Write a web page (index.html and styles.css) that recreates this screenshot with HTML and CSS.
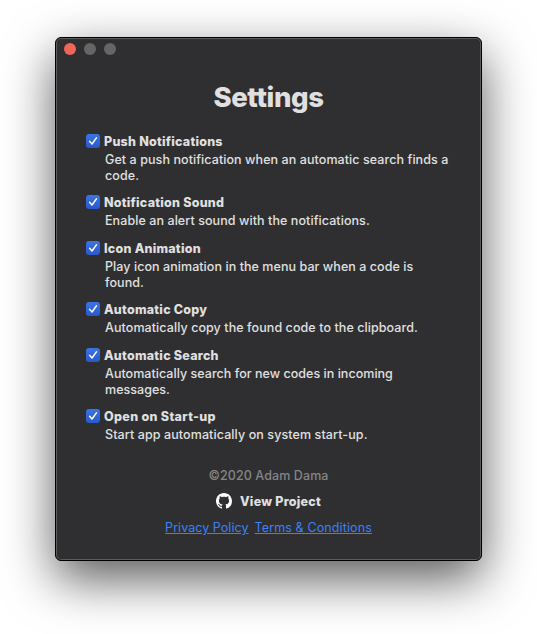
FILE: index.html
```html
<!DOCTYPE html>
<html lang="en">
<head>
<meta charset="utf-8">
<title>Settings</title>
<link rel="stylesheet" href="styles.css">
</head>
<body>
<main class="window">
  <div class="titlebar"><span class="dot close"></span><span class="dot"></span><span class="dot"></span></div>
  <h1>Settings</h1>
  <section class="options">
    <div class="option two"><span class="check"><svg viewBox="0 0 14 14"><path d="M3.6 7.3 6 10 10.4 3.9"/></svg></span><div class="copy"><h2 class="t1">Push Notifications</h2><p class="d1">Get a push notification when an automatic search finds a<br>code.</p></div></div>
    <div class="option"><span class="check"><svg viewBox="0 0 14 14"><path d="M3.6 7.3 6 10 10.4 3.9"/></svg></span><div class="copy"><h2 class="t2">Notification Sound</h2><p class="d2">Enable an alert sound with the notifications.</p></div></div>
    <div class="option two"><span class="check"><svg viewBox="0 0 14 14"><path d="M3.6 7.3 6 10 10.4 3.9"/></svg></span><div class="copy"><h2 class="t3">Icon Animation</h2><p class="d3">Play icon animation in the menu bar when a code is<br>found.</p></div></div>
    <div class="option"><span class="check"><svg viewBox="0 0 14 14"><path d="M3.6 7.3 6 10 10.4 3.9"/></svg></span><div class="copy"><h2 class="t4">Automatic Copy</h2><p class="d4">Automatically copy the found code to the clipboard.</p></div></div>
    <div class="option two"><span class="check"><svg viewBox="0 0 14 14"><path d="M3.6 7.3 6 10 10.4 3.9"/></svg></span><div class="copy"><h2 class="t5">Automatic Search</h2><p class="d5">Automatically search for new codes in incoming<br>messages.</p></div></div>
    <div class="option"><span class="check"><svg viewBox="0 0 14 14"><path d="M3.6 7.3 6 10 10.4 3.9"/></svg></span><div class="copy"><h2 class="t6">Open on Start-up</h2><p class="d6">Start app automatically on system start-up.</p></div></div>
  </section>
  <footer>
    <p class="copyright">©2020 Adam Dama</p>
    <div class="project"><svg viewBox="0 0 16 16"><path d="M8 0C3.58 0 0 3.58 0 8c0 3.54 2.29 6.53 5.47 7.59.4.07.55-.17.55-.38 0-.19-.01-.82-.01-1.49-2.01.37-2.53-.49-2.69-.94-.09-.23-.48-.94-.82-1.13-.28-.15-.68-.52-.01-.53.63-.01 1.08.58 1.23.82.72 1.21 1.87.87 2.33.66.07-.52.28-.87.51-1.07-1.78-.2-3.64-.89-3.64-3.95 0-.87.31-1.59.82-2.15-.08-.2-.36-1.02.08-2.12 0 0 .67-.21 2.2.82.64-.18 1.32-.27 2-.27s1.36.09 2 .27c1.53-1.04 2.2-.82 2.2-.82.44 1.1.16 1.92.08 2.12.51.56.82 1.27.82 2.15 0 3.07-1.87 3.75-3.65 3.95.29.25.54.73.54 1.48 0 1.07-.01 1.93-.01 2.2 0 .21.15.46.55.38A8.01 8.01 0 0 0 16 8c0-4.42-3.58-8-8-8z"/></svg><span>View Project</span></div>
    <div class="links"><a class="privacy" href="#">Privacy Policy</a><a href="#">Terms &amp; Conditions</a></div>
  </footer>
</main>
</body>
</html>
```
FILE: styles.css
```css
* { box-sizing: border-box; margin: 0; padding: 0; }
body {
  height: 634px;
  padding: 37px 55px 0;
  overflow: hidden;
  background: #fff;
  color: #e0e0e0;
  font: 12.5px/16px Inter, "Liberation Sans", sans-serif;
}
.window {
  width: 427px;
  height: 524px;
  border: 1px solid #000;
  border-radius: 6px;
  background: #2f2f31;
  box-shadow: inset 0 0 0 1px #5c5c5e, 0 18px 50px rgba(0, 0, 0, .65);
}
.titlebar { display: flex; gap: 8px; height: 22px; padding: 5px 8px; }
.dot { width: 12px; height: 12px; border-radius: 50%; background: #656565; }
.close { background: #ee6559; }
h1 { margin-top: 20px; font-size: 27.5px; line-height: 34px; font-weight: 800; text-align: center; letter-spacing: -.4px; }
.options { margin-top: 19px; padding-left: 30px; }
.option { display: flex; height: 46px; }
.two { height: 61px; }
.check { width: 14px; height: 14px; margin-top: 1px; border-radius: 3px; background: linear-gradient(#3d74e4, #2859cb); flex: none; }
.check svg { display: block; width: 14px; height: 14px; fill: none; stroke: #fff; stroke-width: 1.5; stroke-linecap: round; stroke-linejoin: round; }
.copy { margin: 1px 0 0 4px; white-space: nowrap; }
h2 { padding-bottom: 2px; font-size: 12.5px; line-height: 16px; font-weight: 800; letter-spacing: .24px; }
.t6 { letter-spacing: .33px; }
.copy p { padding-left: 1px; font-weight: 450; letter-spacing: .08px; }
.copy .d3 { letter-spacing: .065px; }
.copy .d5 { letter-spacing: .035px; }
.copy .d6 { letter-spacing: .1px; }
footer { display: flex; flex-direction: column; align-items: center; margin-top: 14px; }
.copyright { color: #858586; letter-spacing: .1px; font-weight: 450; }
.project { display: flex; align-items: flex-start; gap: 8px; margin-top: 9px; font-weight: 800; letter-spacing: .24px; }
.project svg { width: 16px; height: 16px; fill: #fff; }
.project span { margin-top: 1px; }
.links { display: flex; gap: 6px; margin-top: 10px; letter-spacing: .12px; }
.privacy { letter-spacing: .05px; }
.links a { color: #3b82f6; text-decoration: underline; }
```
